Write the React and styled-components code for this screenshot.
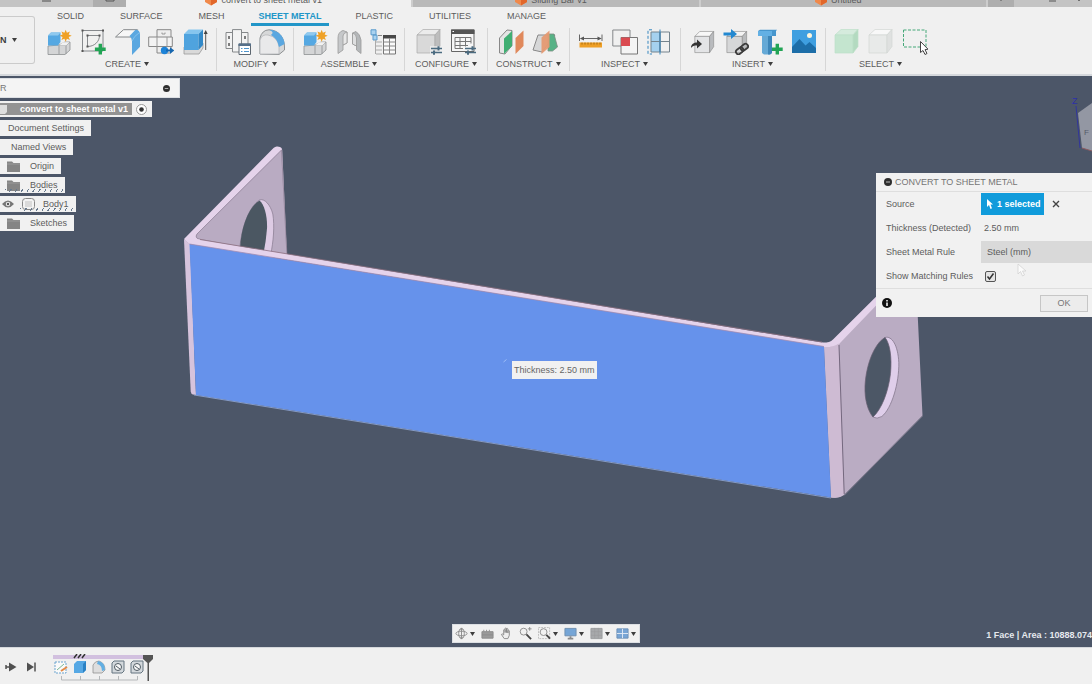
import React from 'react';
import styled, { createGlobalStyle, css } from 'styled-components';

const GlobalStyle = createGlobalStyle`
    * {
        box-sizing: border-box;
    }
    body {
        margin: 0;
        overflow: hidden;
        font-family: "Liberation Sans", Arial, sans-serif;
        font-size: 9px;
        color: #5c5c5c;
        background: #f0f0f0;
    }
    button, input, select {
        font: inherit;
        color: inherit;
        margin: 0;
        padding: 0;
        border: 0;
        background: none;
    }
    svg {
        display: block;
        flex-shrink: 0;
    }
`;

const Page = styled.div`
    display: flex;
    flex-direction: column;
    height: 100vh;
    overflow: hidden;
`;

const FileBar = styled.header`
    display: flex;
    align-items: flex-end;
    height: 7px;
    overflow: hidden;
    background: #c4c4c4;
    flex-shrink: 0;
`;

const FileTab = styled.button`
    display: flex;
    flex: 1;
    justify-content: center;
    align-items: flex-end;
    gap: 4px;
    height: 14px;
    padding-right: 10px;
    line-height: 14px;
    white-space: nowrap;
    background: ${props => (props.$active ? '#f0f0f0' : '#b9b9b9')};
    border-right: 2px solid #cdcdcd;
`;

const QuickButton = styled.button`
    display: flex;
    justify-content: center;
    align-items: flex-end;
    width: ${props => props.$width || 26}px;
    height: 14px;
    padding-bottom: 5px;
    background: ${props => (props.$dark ? '#aeaeae' : 'transparent')};
`;

const Ribbon = styled.div`
    display: flex;
    height: 69px;
    border-bottom: 2px solid #d5d8dc;
    background: #f0f0f0;
    flex-shrink: 0;
`;

const Workspace = styled.button`
    display: flex;
    align-items: center;
    gap: 5px;
    width: 35px;
    height: 48px;
    margin-top: 9px;
    border: 1px solid #cbcbcb;
    border-left: 0;
    border-radius: 0 3px 3px 0;
    font-weight: 700;
    color: #3c3c3c;
`;

const RibbonBody = styled.div`
    display: flex;
    flex-direction: column;
    flex: 1;
`;

const TabRow = styled.nav`
    display: flex;
    height: 19px;
    padding-left: 4px;
`;

const Tab = styled.button`
    padding: 2px 18px 0;
    line-height: 14px;
    border-bottom: 3px solid transparent;
    ${props => props.$active && css`
        padding: 2px 8px 0;
        margin: 0 8px;
        font-weight: 700;
        color: #2296c8;
        border-bottom-color: #2296c8;
    `}
`;

const Groups = styled.div`
    display: flex;
    padding-left: 3px;
`;

const Group = styled.section`
    display: flex;
    flex-direction: column;
    align-items: center;
    gap: 3px;
    height: 43px;
    margin-top: 2px;
    padding: 1px ${props => (props.$wide ? '10px' : '8px')} 0;
    border-right: ${props => (props.$last ? '0' : '1px solid #d6d6d6')};
`;

const Tools = styled.div`
    display: flex;
    gap: 8px;
`;

const GroupLabel = styled.button`
    display: flex;
    align-items: center;
    gap: 3px;
    line-height: 12px;
`;

const Canvas = styled.main`
    position: relative;
    flex: 1;
    overflow: hidden;
    background: #4c5668;
`;

const Model = styled.svg`
    position: absolute;
    left: 183px;
    top: 69px;
`;

const Tooltip = styled.div`
    position: absolute;
    left: 512px;
    top: 285px;
    padding: 0 2px;
    line-height: 18px;
    color: #666;
    background: #f1f1f1;
    white-space: nowrap;
`;

const ViewCube = styled.svg`
    position: absolute;
    right: 0;
    top: 17px;
`;

const Browser = styled.aside`
    position: absolute;
    left: 0;
    top: 2px;
    display: flex;
    flex-direction: column;
    align-items: flex-start;
    gap: 3px;
`;

const BrowserHead = styled.div`
    display: flex;
    justify-content: space-between;
    align-items: center;
    width: 180px;
    height: 20px;
    padding-right: 9px;
    color: #777;
    background: #f4f4f4;
    border: 1px solid #dcdfe3;
    border-left: 0;
`;

const TreeRow = styled.div`
    position: relative;
    display: flex;
    align-items: center;
    gap: ${props => props.$gap || 10}px;
    height: 16px;
    padding: 0 7px 0 ${props => props.$indent}px;
    background: #f1f1f1;
    white-space: nowrap;
    ${props => props.$root && css`
        padding-right: 5px;
        gap: 4px;
        font-weight: 700;
    `}
    ${props => props.$marked && css`
        &::after {
            content: "";
            position: absolute;
            left: ${props.$mark}px;
            right: 2px;
            bottom: 1px;
            height: 3px;
            background: repeating-linear-gradient(120deg, #66788c 0 1px, transparent 1px 5px);
        }
    `}
`;

const RootName = styled.span`
    display: flex;
    align-items: center;
    gap: 13px;
    height: 12px;
    padding-right: 4px;
    color: #fff;
    background: #939393;
`;

const Dialog = styled.form`
    position: absolute;
    right: 0;
    top: 97px;
    width: 216px;
    background: #f1f1f1;
`;

const DialogHead = styled.div`
    display: flex;
    align-items: center;
    gap: 3px;
    height: 19px;
    padding-left: 8px;
    color: #757575;
    border-bottom: 1px solid #dedede;
`;

const Fields = styled.div`
    display: grid;
    grid-template-columns: 95px 1fr;
    grid-auto-rows: 24px;
    align-items: center;
    padding-left: 10px;
`;

const SelectionButton = styled.button`
    display: flex;
    align-items: center;
    gap: 4px;
    height: 22px;
    padding: 0 3px 0 5px;
    color: #fff;
    font-weight: 700;
    background: #109bdb;
`;

const Inline = styled.div`
    display: flex;
    align-items: center;
    gap: 8px;
    white-space: nowrap;
`;

const Value = styled.output`
    padding-left: 3px;
`;

const RuleSelect = styled.select`
    width: 100%;
    height: 22px;
    padding-left: 6px;
    background: #d9d9d9;
    border-radius: 0;
    appearance: none;
`;

const CheckWrap = styled.span`
    position: relative;
    width: 11px;
    height: 11px;
    margin-left: 4px;
`;

const Checkbox = styled.input`
    display: block;
    width: 11px;
    height: 11px;
    border: 1px solid #555;
    border-radius: 2px;
    appearance: none;
    background: #e4e4e4;
`;

const Tick = styled.svg`
    position: absolute;
    left: 0;
    top: 0;
    pointer-events: none;
`;

const DialogFoot = styled.div`
    display: flex;
    justify-content: space-between;
    align-items: center;
    height: 29px;
    padding: 0 4px 0 6px;
    border-top: 1px solid #dedede;
`;

const OkButton = styled.button`
    width: 48px;
    height: 17px;
    color: #777;
    border: 1px solid #c6c6c6;
    background: #ececec;
`;

const Pointer = styled.svg`
    position: absolute;
    left: 1017px;
    top: 187px;
    pointer-events: none;
`;

const NavDock = styled.div`
    position: absolute;
    left: 0;
    right: 0;
    bottom: 4px;
    display: flex;
    justify-content: center;
`;

const NavBar = styled.div`
    display: flex;
    align-items: center;
    gap: 6px;
    height: 19px;
    padding: 0 3px 0 2px;
    background: #f1f1f1;
    border: 1px solid #dcdfe3;
`;

const NavButton = styled.button`
    display: flex;
    align-items: center;
    gap: 2px;
`;

const Status = styled.div`
    position: absolute;
    right: 0;
    bottom: 6px;
    line-height: 12px;
    font-weight: 700;
    color: #e6e9ee;
    white-space: nowrap;
`;

const Timeline = styled.footer`
    display: flex;
    align-items: flex-start;
    height: 37px;
    padding-left: 5px;
    background: #f0f0f0;
    border-top: 1px solid #d5d8dc;
    flex-shrink: 0;
`;

const Playback = styled.div`
    display: flex;
    gap: 8px;
    padding-top: 13px;
    margin-right: 16px;
`;

const Track = styled.div`
    display: flex;
    flex-direction: column;
    width: 89px;
    padding-top: 6px;
`;

const Features = styled.div`
    display: flex;
    gap: 5px;
    padding-left: 1px;
`;

const G = '#6b6f73';
const B = '#5aa7e0';

const Caret = () => (
    <svg width="5" height="4" viewBox="0 0 5 4"><path d="M0 0h5L2.5 4z" fill="#3e3e3e" /></svg>
);

const Plus = () => <path d="M20.3 14.8v10.8M14.9 20.2h10.8" stroke="#22a455" strokeWidth="3.4" />;

const Sliders = () => (
    <g stroke="#4b6b80" strokeWidth="1.3">
        <path d="M15 19.5h11M15 23.5h11" />
        <path d="M22.5 17.2v4.4M18 21.4v4.4" strokeWidth="2" />
    </g>
);

const Solid = ({ top, left, right, line = '#aaa' }) => (
    <g stroke={line} strokeWidth=".7" strokeLinejoin="round">
        <path d="M1 6 7 .5h17L19 6z" fill={top} />
        <path d="M1 6h18v18H1z" fill={left} />
        <path d="M19 6l5-5.5v17L19 24z" fill={right} />
    </g>
);

const shapes = {
    component: (
        <>
            <path d="M2 17l11-1 6-3h5v8l-5 4.5H2z" fill="#d4d5d6" stroke="#8d9092" strokeWidth=".8" />
            <path d="M13 16.5V25M13 16.5h7l4-3.5M20 16.5V25" stroke="#8d9092" strokeWidth=".8" fill="none" />
            <path d="M13 16.5h7l3.6-3.3H17z" fill="#f2f2f2" />
            <path d="M2 6.5 5 3.5h9.5v9.5L12 16.5H2z" fill="#55a8e2" />
            <path d="M2 6.5 5 3.5h9.5L12 6.5z" fill="#8fc9ef" />
            <path d="M19.7 .8l1.2 3 3-1.3-1.2 3 3 1.2-3 1.3 1.2 3-3-1.2-1.2 3-1.3-3-3 1.2 1.2-3-3-1.3 3-1.2-1.2-3 3 1.3z" fill="#efa126" />
        </>
    ),
    sketch: (
        <>
            <path d="M2.5 1.5h20.500v20.500H2.5z" stroke={G} strokeWidth=".8" fill="none" />
            <path d="M7.500 6.500h12c0 6-5 11-12 11z" stroke={G} strokeWidth=".8" fill="none" />
            <path d="M1.500 .5h2v2h-2zM22 .5h2v2h-2zM1.500 21h2v2h-2zM6.500 5.500h2v2h-2zM18.500 5.500h2v2h-2zM6.500 16.500h2v2h-2z" fill="#555" />
            <Plus />
        </>
    ),
    flange: (
        <>
            <path d="M1.500 8 9.500 .7h14L17.500 8z" fill="#f7f7f7" stroke="#85888a" />
            <path d="M15.500 7 21.500 .7q4.500 0 4.500 5v12L18 26V12q0-3-2.500-5z" fill={B} />
            <path d="M18 12q2-5 7.500-8.500" fill="none" stroke="#8cc6ee" strokeWidth=".8" />
        </>
    ),
    unfold: (
        <>
            <path d="M9 .7h14V24H9z" fill="#eee" stroke="#888" />
            <path d="M.7 8h23.600v9.500H.7z" fill="#f3f3f3" stroke="#888" />
            <path d="M9 8v9.500M19 8v9.500M14 3.500V5h3V3.500" fill="none" stroke="#999" />
            <circle cx="16.500" cy="21.500" r="3.700" fill="#1d83d8" />
            <path d="M18 20.500h4v-2.200l4.500 3.200-4.500 3.200v-2.200h-4z" fill="#1667b0" />
        </>
    ),
    extrude: (
        <>
            <path d="M2 18h15l4-4v5l-4 6H2z" fill="#d9d9d9" stroke="#999" strokeWidth=".8" />
            <path d="M2 5h14.500v16H2z" fill="#4fa3de" />
            <path d="M2 5 6.500 .5H21L16.500 5z" fill="#86c5ee" />
            <path d="M16.500 5 21 .5V16l-4.500 5z" fill="#3289c8" />
            <path d="M23.700 21V3" stroke="#555" />
            <path d="M21.700 5h4l-2-4z" fill="#444" />
        </>
    ),
    modifyRule: (
        <>
            <path d="M1 3.500h22v16H1z" fill="#f3f3f3" stroke="#85888a" />
            <path d="M7.500 .6h9V23h-9z" fill="#f3f3f3" stroke="#85888a" />
            <path d="M4 7v3M4 14v3M20 7v3" stroke="#555" strokeWidth="1.500" />
            <path d="M14 15h11.500v10.500H14z" fill="#fff" stroke="#5d6770" />
            <path d="M13.500 14.500h12.500V17H13.500z" fill="#56708a" />
            <path d="M16 19.500h1.500m1.500 0h5M16 22.500h1.500m1.500 0h5" stroke="#4f95cd" />
        </>
    ),
    fillet: (
        <>
            <path d="M1 25V9Q3 1 10 .8C20 1 25.500 9 25.500 18v3L20 25.500z" fill="#d7d8d9" stroke="#8d9092" />
            <path d="M1 25V11Q3 5 9 6q10 2 11 12v7z" fill="#e9e9ea" stroke="#b0b2b4" strokeWidth=".7" />
            <path d="M10 .8C19 1 25 7 25.600 15l-5.600 3Q18 9 12 6 16 3 10 .8z" fill={B} />
        </>
    ),
    joint: (
        <g stroke="#999" strokeWidth=".8">
            <path d="M2 9Q2 3 7 1.500L11 3v11l-4 2v5l-5 3.500z" fill="#c6c8ca" />
            <path d="M7 7q0-3 4-4v11l-4 2z" fill="#e8e8e8" />
            <path d="M25 11q-1-6-5-8.500L16.500 4v11l4 2v4l4.500 3.500z" fill="#b4b7b9" />
            <path d="M16.500 4q4 1 4 5v8l-4-2z" fill="#dedfe0" />
        </g>
    ),
    bom: (
        <>
            <path d="M1 .8h5v5H1zM3 6h4v5H3z" fill="#a9d2f0" stroke="#5b9bcc" />
            <path d="M5.500 11v14M6 13h6m-6 4h6m-6 4h6m-6 4h6" stroke="#aaa" fill="none" />
            <path d="M13.500 7h12v18h-12z" fill="#fafafa" stroke="#777" />
            <path d="M13 6h13v3.500H13z" fill="#484848" />
            <path d="M13.500 13h12m-12 4h12m-12 4h12M19.500 9v16" stroke="#888" />
            <path d="M8 6.500h4" stroke="#888" />
        </>
    ),
    configure: (
        <>
            <Solid top="#ebebeb" left="#d9d9d9" right="#bdbdbd" />
            <path d="M14 17h12v9H14z" fill="#f0f0f0" opacity=".7" />
            <Sliders />
        </>
    ),
    configTable: (
        <>
            <path d="M1.500 1h22.500v21.500H1.500z" fill="#f7f7f7" stroke="#666" />
            <path d="M1 .5h23.500V5H1z" fill="#555" />
            <path d="M5 8.500h16M5 12.500h16M5 16.500h13M5 8.500v11h8M10 8.500v11M15.500 8.500v9M21 8.500v6" stroke="#777" fill="none" />
            <path d="M2.500 2.500h1.500" stroke="#fff" />
            <Sliders />
        </>
    ),
    plane: (
        <>
            <path d="M1.500 9 9 1l5 .5v15L7 25l-5.500-1z" fill="#e5e5e5" stroke="#888" />
            <path d="M6 9.500 14 2v15l-8 8z" fill="#3fae72" />
            <path d="M17.500 9l8-7.500V17l-8 8z" fill="#e0895c" />
        </>
    ),
    midplane: (
        <>
            <path d="M1 21 6 6h17L10 23z" fill="#d6d7d8" stroke="#888" />
            <path d="M16 5h6l3.500 13-5 4H16z" fill="#57b286" stroke="#7b8d82" strokeWidth=".8" />
            <path d="M9.500 8.500 17.500 1.500V18l-8 7z" fill="#e59a72" opacity=".95" />
        </>
    ),
    measure: (
        <>
            <path d="M1.500 13.500h22.500v5H1.500z" fill="#ee9f25" />
            <path d="M4 13.500v2m3-2v2m3-2v2m3-2v2m3-2v2m3-2v2m3-2v2" stroke="#a56a10" />
            <path d="M1.500 5.500V12M24 5.500V12M4 9.500h17" stroke="#666" />
            <path d="M1.800 9.500 6 7.500v4zM23.700 9.500 19.500 7.500v4z" fill="#555" />
        </>
    ),
    interference: (
        <>
            <path d="M.8 1H18v16H.8z" fill="none" stroke="#85888a" />
            <path d="M9 8.500h16.500v16.500H9z" fill="#f4f4f4" stroke="#777" />
            <path d="M9 8.500h9V17H9z" fill="#da4b51" />
        </>
    ),
    section: (
        <>
            <path d="M5 3h9v20H5z" fill="#a5d1ef" />
            <path d="M14 3h9.500v20H14zM5 3h9v20H5zM5 12.500h18.500" fill="none" stroke="#74838d" />
            <path d="M6 .8H2V25h4" fill="none" stroke="#3486bf" strokeDasharray="3 2" />
            <path d="M14 .5v25" stroke="#3486bf" />
        </>
    ),
    insertComponent: (
        <>
            <g transform="translate(5 2) scale(.82 .9)"><Solid top="#f7f7f7" left="#e3e4e6" right="#b9bbbe" line="#888" /></g>
            <path d="M2 19c0-4 3-5.500 6-5.500v-3l5 4.500-5 4.500v-3c-3 0-4.500 .5-6 2.500z" fill="#333" />
        </>
    ),
    derive: (
        <>
            <g transform="translate(3 2) scale(.86 .9)"><Solid top="#f3f3f3" left="#d6d7d8" right="#b9bbbd" line="#888" /></g>
            <path d="M.5 3.500H8V0l6 5-6 5V6.500H.5z" fill="#2388d0" />
            <g transform="rotate(-38 19 20)" fill="none" stroke="#3b3b3b" strokeWidth="1.800">
                <rect x="12" y="17.500" width="8" height="5" rx="2.500" />
                <rect x="18" y="17.500" width="8" height="5" rx="2.500" />
            </g>
        </>
    ),
    bolt: (
        <>
            <path d="M1 2 3 .8h17L19 2v5H1z" fill="#4796cd" />
            <path d="M1 2h14v5H1z" fill="#63b0e4" />
            <path d="M5 7h10v17l-2 1.500H7L5 24z" fill="#65a9d6" />
            <path d="M11 7h4v17l-2 1.500h-2z" fill="#3d86b9" />
            <Plus />
        </>
    ),
    picture: (
        <>
            <path d="M1 1h24v23H1z" fill="#3f9fe0" />
            <circle cx="18.500" cy="6.500" r="2.500" fill="#fff6dc" />
            <path d="M1 18 8.500 10l6 6.500 4-3.500 6.500 6v5H1z" fill="#1d6ea8" />
        </>
    ),
    selectFace: <Solid top="#d5ebdd" left="#c4e5cf" right="#b3dac0" line="#bde0c9" />,
    selectBody: <Solid top="#f8f8f8" left="#e8eae9" right="#dfe1e0" line="#d2d7d4" />,
    selectBox: (
        <>
            <path d="M1.500 1h22.500v17H1.500z" fill="none" stroke="#45a878" strokeDasharray="3 1.500" />
            <path d="M18.500 12.500v11l2.500-2 2 4 2-1-2-3.800 3-.5z" fill="#fff" stroke="#444" />
        </>
    ),
};

const groups = [
    { name: 'CREATE', tools: ['component', 'sketch', 'flange', 'unfold', 'extrude'] },
    { name: 'MODIFY', tools: ['modifyRule', 'fillet'] },
    { name: 'ASSEMBLE', tools: ['component', 'joint', 'bom'] },
    { name: 'CONFIGURE', tools: ['configure', 'configTable'], wide: true },
    { name: 'CONSTRUCT', tools: ['plane', 'midplane'] },
    { name: 'INSPECT', tools: ['measure', 'interference', 'section'] },
    { name: 'INSERT', tools: ['insertComponent', 'derive', 'bolt', 'picture'] },
    { name: 'SELECT', tools: ['selectFace', 'selectBody', 'selectBox'] },
];

const tabs = ['SOLID', 'SURFACE', 'MESH', 'SHEET METAL', 'PLASTIC', 'UTILITIES', 'MANAGE'];

const FileIcon = () => (
    <svg width="12" height="13" viewBox="0 0 12 13">
        <path d="M6 0l6 3v5l-6 3.500L0 8V3z" fill="#f0894b" />
        <path d="M6 5.500 12 3v5l-6 3.500z" fill="#e2672a" />
    </svg>
);

const Minus = ({ size = 8 }) => (
    <svg width={size} height={size} viewBox="0 0 8 8">
        <circle cx="4" cy="4" r="4" fill="#2e2e2e" />
        <path d="M2 4h4" stroke="#bbb" />
    </svg>
);

const Folder = () => (
    <svg width="13" height="11" viewBox="0 0 13 11">
        <path d="M0 .5h5L6.500 2H13v9H0z" fill="#858585" />
        <path d="M0 3h13" stroke="#a6a6a6" strokeWidth=".7" />
    </svg>
);

const Part = () => (
    <Model width="740" height="354" viewBox="183 145 740 354">
        {/* left flange */}
        <path d="M184 239 273.500 148q2-2 4-1.500l2.500 .5q2 .5 2.200 3L287 256l-20 2-77-14z" fill="#e5d3eb" />
        <path d="M197 234 281.500 150 287 256l-86-16.500q-7-1-4-5.500z" fill="#b9abc2" stroke="#85788e" strokeWidth=".7" />
        <path d="M259.500 200c5-2 11 5 13.300 14 2 12 .5 28-2 40l-31-6c2-22 10-42 19.700-48z" fill="#ddcbe4" stroke="#85788e" strokeWidth=".7" />
        <path d="M259.500 200.500c5 4 8 16 7.500 28q-1 13-3.500 25l-23.500-5c1-22 9-42 19.500-48z" fill="#4b5762" />
        {/* right flange */}
        <path d="M824 346 832 342l83-83 7.500 156.500L844 495q-5 4-13 2.500z" fill="#baacc3" />
        <path d="M820 342.500q9 1 13-3L915 258l3 4-77 80q-4 5-8 5h-9z" fill="#e5d3eb" />
        <path d="M824 346.500q9 1 14.500-3L844 494.500q-5 4-13 3z" fill="#cebbd3" />
        <path d="M839 345l5.200 149" stroke="#6c6076" strokeWidth=".9" />
        <path d="M844 495.500 922.500 416" stroke="#978b9f" strokeWidth=".7" />
        <path d="M885 337.500c7-2 13 8 13.800 25 .5 20-7 46-17 54q-5 3-9 .5z" fill="#dfceea" stroke="#85788e" strokeWidth=".8" />
        <path d="M885 337.500c5 6 7 20 5.500 36-2 18-9 36-17.500 43.500-5-6-8.500-17-8-31 1-21 9-42 20-48.500z" fill="#4c5766" stroke="#655d70" strokeWidth=".7" />
        {/* web */}
        <path d="M184 239.500 196 239l626 103.500q6 1 10-.5l-2 5h-6L189 244z" fill="#e5d3eb" />
        <path d="M200 239.500l86 14.200L822 342" fill="none" stroke="#8b6f7f" strokeWidth=".8" />
        <path d="M184 239.500 190 244l6 151-3-.5q-2-.5-2.300-3z" fill="#d6c3dc" />
        <path d="M189.500 244 824 346.500 831 497.500 196 395z" fill="#6692eb" />
        <path d="M189.500 244 824 346.500" stroke="#a18db4" strokeWidth=".8" />
        <path d="M194 395 831 498" stroke="#8ba1cf" strokeWidth=".9" />
        <path d="M503.500 362l3-2.500" stroke="#9dbdf7" />
    </Model>
);

const NavIcon = ({ children }) => (
    <svg width="13" height="13" viewBox="0 0 14 14" fill="none" stroke="#8a8a8a">{children}</svg>
);

const navItems = [
    { name: 'Orbit', caret: true, art: <><path d="M7 1v12M5 3l2-2 2 2M5 11l2 2 2-2" /><ellipse cx="7" cy="7" rx="6" ry="2.500" /><ellipse cx="7" cy="7" rx="3" ry="5" /></> },
    { name: 'Look at', art: <path d="M1 5h12v7H1zM3 3v2m3-2v2m3-2v2M1 8.500h12" fill="#9a9a9a" /> },
    { name: 'Pan', art: <path d="M4.500 12.500 1.500 8q.5-1.500 2.500 .5V3q1-1 1.500 0v3V1.500q1-1 1.500 0V6V2q1-1 1.500 0v4.500V4q1-1 1.500 0v5l-1.500 3.500z" fill="#eee" stroke="#888" /> },
    { name: 'Zoom', art: <><circle cx="5" cy="5" r="3.700" /><path d="M8 8l5 5" stroke="#444" strokeWidth="2" /><path d="M9.500 2h4M11.500 0v4" /></> },
    { name: 'Zoom window', caret: true, art: <><path d="M.5 .5h12v12H.5z" stroke="#bbb" strokeDasharray="2 1" /><circle cx="6" cy="5.500" r="3.700" /><path d="M9 8.500l4 4" stroke="#444" strokeWidth="2" /></> },
    { name: 'Display', caret: true, art: <><path d="M1 1.500h12v8H1z" fill="#75a5d6" stroke="#6f8fae" /><path d="M4 12.500h6M7 10v2" strokeWidth="2" /></> },
    { name: 'Grid', caret: true, art: <><path d="M1 1.500h12v11H1z" fill="#a7a9ab" stroke="#9b9d9f" /><path d="M1 5h12M1 9h12M5 1v11M9 1v11" stroke="#999b9d" strokeWidth=".6" /></> },
    { name: 'Viewports', caret: true, art: <><path d="M1 2h12v10H1z" fill="#78a5d5" stroke="#6b8fb5" /><path d="M7 2v10M1 7h12" stroke="#e2ebf5" /></> },
];

const convertArt = (
    <>
        <path d="M1 3 3 1h10v10l-2 2H1z" fill="#d3d8dc" stroke="#657580" />
        <circle cx="7" cy="7" r="3.500" fill="#f7f7f7" stroke="#4d5962" />
        <path d="M5 6l4 3" stroke="#4d5962" />
    </>
);

const features = [
    <><path d="M1 2h11v11H1z" fill="#fafafa" stroke="#6da4cf" strokeDasharray="2 1" /><path d="M3 10l7-6" stroke="#7ab894" /><path d="M7 11l6-4" stroke="#e58a45" strokeWidth="2" /></>,
    <><path d="M1 4 4 1h9v9l-3 3H1z" fill="#56a8e4" /><path d="M10 4l3-3v9l-3 3z" fill="#2b82c4" /></>,
    <><path d="M1 13V5q2-4 6-4 6 2 6 9l-3 3z" fill="#dedede" stroke="#888" strokeWidth=".7" /><path d="M6 1q7 1 7 9l-3 1Q10 5 5 4z" fill="#61afe3" /></>,
    convertArt,
    convertArt,
];

export default function App() {
    return (
        <>
        <GlobalStyle />
        <Page>
            <FileBar>
                <QuickButton $width={93} aria-label="Save"><svg width="10" height="4"><path d="M0 3h9" stroke="#888" strokeWidth="2" /></svg></QuickButton>
                <QuickButton $dark $width={33} aria-label="Home"><svg width="10" height="6"><path d="M1 0v5h8V0M5 0v4" stroke="#555" fill="none" /></svg></QuickButton>
                <FileTab $active><FileIcon />convert to sheet metal v1</FileTab>
                <FileTab><FileIcon />Sliding Bar v1</FileTab>
                <FileTab><FileIcon />Untitled</FileTab>
                <QuickButton $dark aria-label="New tab"><svg width="2" height="5"><path d="M1 0v4" stroke="#555" /></svg></QuickButton>
                <QuickButton aria-label="Extensions"><svg width="6" height="5"><path d="M1 0q2 5 4 0" stroke="#555" fill="none" /></svg></QuickButton>
                <QuickButton aria-label="Jobs"><svg width="8" height="4"><path d="M0 3h7" stroke="#555" /></svg></QuickButton>
                <QuickButton aria-label="Alerts"><svg width="4" height="4"><circle cx="2" cy="2" r="1" fill="#555" /></svg></QuickButton>
            </FileBar>

            <Ribbon>
                <Workspace>N <Caret /></Workspace>
                <RibbonBody>
                    <TabRow>
                        {tabs.map(tab => <Tab key={tab} $active={tab === 'SHEET METAL'}>{tab}</Tab>)}
                    </TabRow>
                    <Groups>
                        {groups.map(group => (
                            <Group key={group.name} $wide={group.wide} $last={group.name === 'SELECT'}>
                                <Tools>
                                    {group.tools.map(tool => (
                                        <button key={tool} aria-label={tool}>
                                            <svg width="26" height="26" viewBox="0 0 26 26">{shapes[tool]}</svg>
                                        </button>
                                    ))}
                                </Tools>
                                <GroupLabel>{group.name}<Caret /></GroupLabel>
                            </Group>
                        ))}
                    </Groups>
                </RibbonBody>
            </Ribbon>

            <Canvas>
                <Part />
                <Tooltip>Thickness: 2.50 mm</Tooltip>
                <ViewCube width="22" height="60" viewBox="1070 93 22 60">
                    <path d="M1076 106l4 42" stroke="#31359d" />
                    <path d="M1078 113 1092 103v48l-10-3z" fill="#9397a3" />
                    <path d="M1082 148l10 3" stroke="#8c5a60" />
                    <text x="1072" y="104" fontSize="9" fill="#2c30a8">Z</text>
                    <text x="1084" y="135" fontSize="8" fill="#555b69">F</text>
                </ViewCube>

                <Browser>
                    <BrowserHead>R<Minus size={7} /></BrowserHead>
                    <TreeRow $root $indent={0}>
                        <RootName>
                            <svg width="7" height="10"><path d="M0 1h7v7L5 10H0z" fill="#dedede" /></svg>
                            convert to sheet metal v1
                        </RootName>
                        <svg width="11" height="11" viewBox="0 0 11 11">
                            <circle cx="5.500" cy="5.500" r="5" fill="#fff" stroke="#999" />
                            <circle cx="5.500" cy="5.500" r="2.300" fill="#333" />
                        </svg>
                    </TreeRow>
                    <TreeRow $indent={8}>Document Settings</TreeRow>
                    <TreeRow $indent={11}>Named Views</TreeRow>
                    <TreeRow $indent={7}><Folder />Origin</TreeRow>
                    <TreeRow $indent={7} $marked $mark={5}><Folder />Bodies</TreeRow>
                    <TreeRow $indent={2} $gap={8} $marked $mark={20}>
                        <svg width="12" height="8" viewBox="0 0 12 8">
                            <path d="M0 4q6-7 12 0-6 7-12 0z" fill="#777" />
                            <circle cx="6" cy="4" r="2.200" fill="#eee" />
                            <circle cx="6" cy="4" r="1.200" fill="#555" />
                        </svg>
                        <svg width="13" height="12" viewBox="0 0 13 12">
                            <rect x=".5" y=".5" width="12" height="11" rx="3" fill="#f3f3f3" stroke="#888" />
                            <path d="M3 3h7v6H3z" fill="#dadada" />
                        </svg>
                        Body1
                    </TreeRow>
                    <TreeRow $indent={7}><Folder />Sketches</TreeRow>
                </Browser>

                <Dialog onSubmit={event => event.preventDefault()}>
                    <DialogHead><Minus />CONVERT TO SHEET METAL</DialogHead>
                    <Fields>
                        <label htmlFor="source">Source</label>
                        <Inline>
                            <SelectionButton id="source" type="button">
                                <svg width="7" height="10" viewBox="0 0 7 10"><path d="M1 0v8l2-2 1.500 4 1.500-.7L4.500 5.500H7z" fill="#fff" /></svg>
                                1 selected
                            </SelectionButton>
                            <button type="button" aria-label="Clear selection">
                                <svg width="8" height="8" viewBox="0 0 8 8"><path d="M1 1l6 6M7 1 1 7" stroke="#444" strokeWidth="1.400" /></svg>
                            </button>
                        </Inline>
                        <label htmlFor="thickness">Thickness (Detected)</label>
                        <Value id="thickness">2.50 mm</Value>
                        <label htmlFor="rule">Sheet Metal Rule</label>
                        <RuleSelect id="rule"><option>Steel (mm)</option></RuleSelect>
                        <label htmlFor="matching">Show Matching Rules</label>
                        <CheckWrap>
                            <Checkbox id="matching" type="checkbox" defaultChecked />
                            <Tick width="11" height="11" viewBox="0 0 11 11"><path d="M2.500 5.500l2 2.500 4-5.500" fill="none" stroke="#333" strokeWidth="1.500" /></Tick>
                        </CheckWrap>
                    </Fields>
                    <DialogFoot>
                        <svg width="10" height="10" viewBox="0 0 10 10">
                            <circle cx="5" cy="5" r="5" fill="#111" />
                            <path d="M5 2v1.500M5 4.500V8" stroke="#fff" strokeWidth="1.500" />
                        </svg>
                        <OkButton>OK</OkButton>
                    </DialogFoot>
                </Dialog>
                <Pointer width="10" height="14" viewBox="0 0 10 14">
                    <path d="M1 1v10l2.500-2.500L5.500 13l2-1-2-4H9z" fill="#fbfbfb" stroke="#cfcfcf" strokeWidth=".7" />
                </Pointer>

                <NavDock>
                    <NavBar>
                        {navItems.map(item => (
                            <NavButton key={item.name} aria-label={item.name}>
                                <NavIcon>{item.art}</NavIcon>
                                {item.caret && <Caret />}
                            </NavButton>
                        ))}
                    </NavBar>
                </NavDock>
                <Status>1 Face | Area : 10888.074</Status>
            </Canvas>

            <Timeline>
                <Playback>
                    <button aria-label="Play"><svg width="12" height="12" viewBox="0 0 12 12"><path d="M4 1.500 11.500 6 4 10.500z" fill="#505050" /><path d="M1 4v4M1 6h4" stroke="#505050" strokeWidth="1.500" /></svg></button>
                    <button aria-label="Go to end"><svg width="12" height="12" viewBox="0 0 12 12"><path d="M2 1.500 9 6 2 10.500z" fill="#505050" /><path d="M10 1.500v9" stroke="#505050" strokeWidth="1.500" /></svg></button>
                </Playback>
                <Track>
                    <svg width="95" height="6" viewBox="0 0 95 6">
                        <path d="M0 1h95v4H0z" fill="#d2c0df" />
                        <path d="M21 4l3-4m1 4 3-4m1 4 3-4" stroke="#333" strokeWidth="1.500" />
                    </svg>
                    <Features>
                        {features.map((art, i) => (
                            <svg key={i} width="14" height="14" viewBox="0 0 14 14">{art}</svg>
                        ))}
                    </Features>
                    <svg width="89" height="7" viewBox="0 0 89 7">
                        <path d="M8.500 2v4h76V2M27.500 2v4M46.500 2v4M65.500 2v4" fill="none" stroke="#b5b8ba" />
                    </svg>
                </Track>
                <svg width="11" height="34" viewBox="0 0 11 34">
                    <path d="M1 7h10v4L7 15v18H5.500V15L1 11z" fill="#555" />
                </svg>
            </Timeline>
        </Page>
        </>
    );
}
